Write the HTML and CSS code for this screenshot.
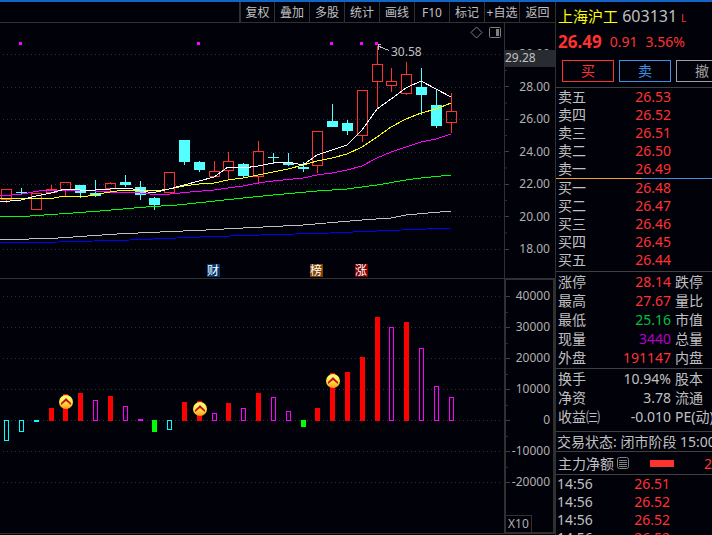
FILE: index.html
```html
<!DOCTYPE html>
<html lang="zh-CN">
<head>
    <meta charset="UTF-8">
    <meta name="viewport" content="width=device-width, initial-scale=1.0">
    <title>上海沪工 603131</title>
    <link rel="stylesheet" href="styles.css">
</head>
<body>
    <!-- 左侧：工具栏和图表 -->
    <main class="charts">
        <nav class="toolbar">
            <button>复权</button>
            <button>叠加</button>
            <button>多股</button>
            <button>统计</button>
            <button>画线</button>
            <button>F10</button>
            <button>标记</button>
            <button>+自选</button>
            <button>返回</button>
        </nav>

        <!-- K线图 -->
        <section class="panel price-panel">
            <svg class="plot" viewBox="0 23 504 255" preserveAspectRatio="xMinYMin meet">
                <g class="grid">
                    <path d="M3 54.5H501M3 87.5H501M3 119.5H501M3 152.5H501M3 184.5H501M3 216.5H501M3 249.5H501"/>
                </g>
                <g id="candles"></g>
                <g id="averages"></g>
                <g fill="#ff00ff">
                    <rect x="19" y="42" width="3" height="3"/>
                    <rect x="197" y="42" width="3" height="3"/>
                    <rect x="330" y="42" width="3" height="3"/>
                    <rect x="360" y="42" width="3" height="3"/>
                    <rect x="375" y="42" width="3" height="3"/>
                </g>
                <path class="arrow" d="M389 50.5L378 46M381 44.5H378V49.5"/>
                <text class="high" x="391" y="56">30.58</text>
                <g class="tool-icons">
                    <path d="M476.5 27L482 32.5L476.5 38L471 32.5Z"/>
                    <rect x="489.500" y="27.500" width="11" height="10" rx="1"/>
                    <rect x="496" y="29" width="3" height="7" fill="#808080" stroke="none"/>
                </g>
                <g class="mark">
                    <rect x="207" y="264" width="13" height="13" fill="#003870"/>
                    <text x="213" y="275">财</text>
                    <rect x="310" y="264" width="13" height="13" fill="#804000"/>
                    <text x="316" y="275">榜</text>
                    <rect x="355" y="264" width="13" height="13" fill="#800000"/>
                    <text x="361" y="275">涨</text>
                </g>
            </svg>
            <div class="axis">
                <ul class="scale">
                    <li>30.00</li>
                    <li>28.00</li>
                    <li>26.00</li>
                    <li>24.00</li>
                    <li>22.00</li>
                    <li>20.00</li>
                    <li>18.00</li>
                </ul>
                <span class="cursor-price">29.28</span>
            </div>
        </section>

        <!-- 资金副图 -->
        <section class="panel volume-panel">
            <svg class="plot" viewBox="0 279 504 254" preserveAspectRatio="xMinYMin meet">
                <defs>
                    <linearGradient id="gold" x1="0" y1="0" x2="0" y2="1">
                        <stop offset="0" stop-color="#ffff70"/>
                        <stop offset="0.5" stop-color="#ffe640"/>
                        <stop offset="1" stop-color="#ff9820"/>
                    </linearGradient>
                    <g id="signal">
                        <circle r="7" fill="url(#gold)"/>
                        <path d="M-4 -1L0 -4L4 -1" fill="none" stroke="#fff8d0"/>
                        <path d="M-5 3V1L0 -4L5 1V3L0 -1Z" fill="#c01010"/>
                    </g>
                </defs>
                <g class="grid">
                    <path d="M3 296.5H501M3 327.5H501M3 358.5H501M3 389.5H501M3 420.5H501M3 451.5H501M3 482.5H501"/>
                </g>
                <g id="bars"></g>
                <use href="#signal" x="66" y="402"/>
                <use href="#signal" x="200" y="409"/>
                <use href="#signal" x="333" y="381"/>
            </svg>
            <div class="axis">
                <ul class="scale">
                    <li>40000</li>
                    <li>30000</li>
                    <li>20000</li>
                    <li>10000</li>
                    <li>0</li>
                    <li>-10000</li>
                    <li>-20000</li>
                </ul>
                <span class="unit">X10</span>
            </div>
        </section>
    </main>

    <!-- 右侧：盘口 -->
    <aside class="quote">
        <header class="quote-head">
            <h1><span class="name">上海沪工</span> <span class="code">603131</span><sup>L</sup></h1>
            <p class="last"><strong>26.49</strong><span>0.91</span><span>3.56%</span></p>
            <div class="trade">
                <button class="buy">买</button>
                <button class="sell">卖</button>
                <button class="cancel">撤</button>
            </div>
        </header>

        <table class="book">
            <tr><th>卖五</th><td>26.53</td></tr>
            <tr><th>卖四</th><td>26.52</td></tr>
            <tr><th>卖三</th><td>26.51</td></tr>
            <tr><th>卖二</th><td>26.50</td></tr>
            <tr><th>卖一</th><td>26.49</td></tr>
        </table>
        <div class="ratio"><i class="ratio-ask"></i><i class="ratio-bid"></i></div>
        <table class="book bids">
            <tr><th>买一</th><td>26.48</td></tr>
            <tr><th>买二</th><td>26.47</td></tr>
            <tr><th>买三</th><td>26.46</td></tr>
            <tr><th>买四</th><td>26.45</td></tr>
            <tr><th>买五</th><td>26.44</td></tr>
        </table>

        <table class="stats">
            <tr><th>涨停</th><td class="up">28.14</td><th>跌停</th></tr>
            <tr><th>最高</th><td class="up">27.67</td><th>量比</th></tr>
            <tr><th>最低</th><td class="down">25.16</td><th>市值</th></tr>
            <tr><th>现量</th><td class="now">3440</td><th>总量</th></tr>
            <tr><th>外盘</th><td class="up">191147</td><th>内盘</th></tr>
        </table>
        <table class="stats basics">
            <tr><th>换手</th><td>10.94%</td><th>股本</th></tr>
            <tr><th>净资</th><td>3.78</td><th>流通</th></tr>
            <tr><th>收益㈢</th><td>-0.010</td><th>PE(动)</th></tr>
        </table>

        <p class="status">交易状态: 闭市阶段 15:00</p>
        <div class="flow">
            <span>主力净额</span>
            <svg class="list-icon" width="12" height="12" viewBox="0 0 12 12">
                <rect x="0.500" y="0.500" width="11" height="11" rx="2"/>
                <path d="M2 3.500H10M2 5.500H10M2 7.500H10M2 9.500H10"/>
            </svg>
            <i class="flow-bar"></i>
            <span class="up">2</span>
        </div>

        <table class="ticks">
            <tr><td>14:56</td><td>26.51</td></tr>
            <tr><td>14:56</td><td>26.52</td></tr>
            <tr><td>14:56</td><td>26.52</td></tr>
            <tr><td>14:56</td><td>26.52</td></tr>
        </table>
    </aside>

    <script src="chart.js"></script>
</body>
</html>
```
FILE: styles.css
```css
* {
    box-sizing: border-box;
}
body {
    display: flex;
    height: 100vh;
    margin: 0;
    overflow: hidden;
    background: #01010a;
    border-top: 2px solid #1464c8;
    color: #c0c0c0;
    font-family: "Noto Sans", "Noto Sans CJK SC", sans-serif;
    font-size: 14px;
}
button {
    padding: 0;
    background: none;
    font-family: inherit;
    cursor: pointer;
}
h1, p, ul {
    margin: 0;
    padding: 0;
    font-weight: normal;
}

/* 图表区 */
.charts {
    display: flex;
    flex: 1;
    flex-direction: column;
    min-width: 0;
}
.toolbar {
    display: flex;
    justify-content: flex-end;
    height: 21px;
    border-bottom: 1px solid #303030;
}
.toolbar button {
    width: 35px;
    border: none;
    border-right: 1px solid #303030;
    color: #c0c0c0;
    font-size: 12px;
    white-space: nowrap;
}
.toolbar button:first-child {
    border-left: 2px solid #303030;
    width: 36px;
}
.toolbar button:last-child {
    border-right: none;
}
.panel {
    display: flex;
}
.price-panel {
    flex: 255;
}
.volume-panel {
    flex: 254;
    border-top: 1px solid #303030;
    border-bottom: 1px solid #303030;
    margin-bottom: 1px;
}
.plot {
    flex: 1;
    min-width: 0;
    shape-rendering: crispEdges;
}
.grid path {
    stroke: #303030;
    stroke-dasharray: 1 3;
}
.average {
    fill: none;
    stroke-width: 1;
}
.arrow {
    fill: none;
    stroke: #c0c0c0;
}
.high {
    fill: #c0c0c0;
    font-size: 12px;
}
.tool-icons {
    fill: none;
    stroke: #808080;
    shape-rendering: auto;
}
.mark text {
    fill: #ffffff;
    font-size: 12px;
    text-anchor: middle;
}
#signal {
    shape-rendering: auto;
}

/* 坐标轴 */
.axis {
    position: relative;
    display: flex;
    flex-direction: column;
    width: 51px;
    border-left: 1px solid #303030;
    color: #b0b0b0;
    font-size: 12px;
    line-height: 16px;
}
.volume-panel .axis {
    border: 2px solid #303030;
    border-top-width: 1px;
    border-bottom-width: 1px;
}
.scale {
    display: flex;
    flex: 1;
    flex-direction: column;
    justify-content: space-between;
    padding: 23px 5px 21px 0;
    list-style: none;
    background: linear-gradient(#303030 1px, transparent 1px) 0 24px / 2px calc((100% - 16px) / 6) repeat-y content-box;
}
.volume-panel .scale {
    padding: 8px 3px 42px 0;
}
.scale li {
    display: flex;
    align-items: center;
    justify-content: space-between;
}
.scale li::before {
    content: "";
    width: 4px;
    height: 1px;
    background: #404040;
}
.cursor-price {
    position: absolute;
    top: 27px;
    right: 0;
    left: 0;
    height: 17px;
    background: #282b30;
    color: #c0c0c0;
}
.unit {
    position: absolute;
    bottom: 0;
    left: 0;
    padding: 0 2px;
    border: 1px solid #303030;
    border-width: 1px 1px 0 0;
}

/* 盘口 */
.quote {
    flex: 0 0 157px;
    overflow: hidden;
    border-left: 1px solid #303030;
    white-space: nowrap;
}
.quote-head {
    padding: 4px 0 5px 2px;
    border-bottom: 1px solid #404040;
}
.quote h1 {
    height: 20px;
    font-size: 16px;
    line-height: 20px;
}
.quote .name {
    color: #ffff00;
    font-size: 15px;
}
.quote sup {
    margin-left: 4px;
    color: #ff3232;
    font-size: 10px;
    line-height: 10px;
    vertical-align: middle;
}
.last {
    display: flex;
    align-items: center;
    gap: 8px;
    height: 30px;
    color: #ff3232;
}
.last strong {
    font-size: 17px;
}
.trade {
    display: flex;
    gap: 5px;
    margin-top: 4px;
    padding-left: 4px;
}
.trade button {
    flex: 0 0 52px;
    height: 22px;
    border: 1px solid;
    font-size: 14px;
    line-height: 18px;
}
.buy {
    color: #ff3232;
}
.sell {
    color: #4090e0;
}
.cancel {
    color: #a0a0a0;
}
table {
    border-spacing: 0;
    table-layout: fixed;
    width: 160px;
}
th, td {
    height: 18px;
    padding: 0;
    font-weight: normal;
    line-height: 18px;
    text-align: right;
}
th {
    width: 50px;
    padding-left: 2px;
    text-align: left;
}
.book {
    width: 115px;
}
.book td, .stats .up, .up {
    color: #ff3232;
}
.ratio {
    display: flex;
    height: 1px;
}
.ratio-ask {
    flex: 86;
    background: #f0a030;
}
.ratio-bid {
    flex: 70;
    background: #4090e0;
}
.bids {
    margin-bottom: 2px;
}
.stats {
    margin-bottom: 1px;
    border-top: 1px solid #404040;
}
.stats th, .stats td {
    height: 19px;
    line-height: 19px;
}
.stats td {
    width: 65px;
}
.stats th:last-child {
    padding-left: 4px;
}
.basics {
    margin-bottom: 5px;
}
.down {
    color: #00c040;
}
.now {
    color: #b400c8;
}
.status {
    padding-left: 1px;
    border-top: 1px solid #404040;
    line-height: 19px;
}
.flow {
    display: flex;
    align-items: center;
    height: 24px;
    padding-left: 2px;
    border: 1px solid #404040;
    border-width: 1px 0;
}
.list-icon {
    margin: 0 21px 0 3px;
    fill: none;
    stroke: #808080;
}
.flow-bar {
    width: 24px;
    height: 7px;
    margin-right: 30px;
    background: #ff3232;
}
.ticks {
    width: 114px;
}
.ticks td:first-child {
    padding-left: 1px;
    text-align: left;
}
.ticks td:last-child {
    color: #ff3232;
}
```
FILE: chart.js
```js
const UP = '#ff3232';
const DOWN = '#54ffff';

// K线：x, 实体上, 实体下, 最高, 最低, 涨(1)/跌(0)
const candles = [
    [6, 189, 200, 189, 203, 1],
    [21, 192, 193, 188, 195, 0],
    [36, 193, 210, 193, 210, 1],
    [51, 189, 193, 185, 193, 1],
    [65, 182, 190, 182, 197, 1],
    [80, 185, 193, 185, 198, 0],
    [95, 193, 196, 180, 197, 0],
    [110, 183, 189, 182, 192, 1],
    [125, 182, 185, 175, 187, 0],
    [140, 187, 195, 181, 200, 0],
    [154, 198, 205, 197, 210, 0],
    [169, 172, 193, 172, 193, 1],
    [184, 140, 162, 140, 165, 0],
    [199, 162, 170, 161, 172, 0],
    [214, 171, 177, 161, 177, 1],
    [228, 161, 171, 152, 180, 1],
    [243, 164, 176, 163, 177, 0],
    [258, 151, 177, 141, 184, 1],
    [273, 157, 158, 153, 164, 0],
    [288, 163, 165, 153, 166, 0],
    [303, 167, 169, 162, 172, 0],
    [317, 131, 166, 131, 173, 1],
    [332, 121, 127, 104, 127, 0],
    [347, 123, 131, 120, 135, 0],
    [362, 90, 136, 90, 142, 1],
    [377, 64, 82, 46, 108, 1],
    [391, 81, 86, 68, 92, 1],
    [406, 74, 94, 62, 95, 1],
    [421, 87, 95, 68, 115, 0],
    [436, 105, 126, 90, 128, 0],
    [451, 111, 123, 93, 133, 1]
];

// 均线
const averages = {
    '#0000ff': '0,243 58,242 130,240 200,237 260,235 330,233 377,231 451,228',
    '#c0c0c0': '0,240 58,238 117,234 160,232 206,230 243,228 303,225 362,220 391,218 406,215 451,211',
    '#00ff00': '0,217 30,216 73,213 100,211 123,209 146,207 177,205 206,202 243,198 273,195 317,191 347,189 377,185 406,180 421,178 451,175',
    '#ff00ff': '0,196 22,194 45,190 80,190 110,192 130,192 150,194 170,194 190,192 214,190 228,188 243,186 258,183 273,181 303,178 317,175 332,173 347,170 362,166 377,158 391,152 406,147 421,142 436,139 451,134',
    '#ffff00': '0,198 40,198 48,199 65,196 88,196 110,192 125,190 146,190 156,191 169,189 184,186 199,184 214,183 228,180 243,178 258,175 273,172 288,169 303,165 317,161 332,158 347,154 362,147 377,137 391,127 406,119 421,113 436,109 451,103',
    '#ffffff': '0,202 21,200 36,196 51,193 65,189 80,190 95,190 110,189 125,188 140,190 152,193 169,189 184,185 199,181 214,177 228,167 243,168 258,166 273,163 288,162 303,165 317,155 332,150 347,145 362,130 377,109 391,99 406,88 421,81 436,89 451,97'
};

// 副图柱：上, 下, 颜色, 是否空心
const bars = [
    [420, 441, '#00ffff', 1], [420, 432, '#00ffff', 1], [420, 422, '#00ffff', 0],
    [408, 421, '#ff0000', 0], [394, 421, '#ff0000', 0], [393, 421, '#ff0000', 0],
    [400, 421, '#ff00ff', 1], [396, 421, '#ff0000', 0], [406, 421, '#ff00ff', 1],
    [419, 421, '#ff00ff', 0], [420, 432, '#00ff00', 0], [420, 430, '#00ffff', 1],
    [402, 421, '#ff0000', 0], [401, 421, '#ff0000', 0], [413, 421, '#ff00ff', 1],
    [403, 421, '#ff0000', 0], [408, 421, '#ff00ff', 1], [393, 421, '#ff0000', 0],
    [397, 421, '#ff00ff', 1], [411, 421, '#ff00ff', 1], [420, 427, '#00ff00', 0],
    [408, 421, '#ff0000', 0], [373, 421, '#ff0000', 0], [372, 421, '#ff0000', 0],
    [357, 421, '#ff0000', 0], [317, 421, '#ff0000', 0], [327, 421, '#ff00ff', 1],
    [322, 421, '#ff0000', 0], [348, 421, '#ff00ff', 1], [386, 421, '#ff00ff', 1],
    [397, 421, '#ff00ff', 1]
];

function box(x, top, width, bottom, color, hollow) {
    if (hollow) {
        return `<rect x="${x + 0.5}" y="${top + 0.5}" width="${width - 1}" height="${bottom - top - 1}" fill="none" stroke="${color}"/>`;
    }
    return `<rect x="${x}" y="${top}" width="${width}" height="${bottom - top}" fill="${color}"/>`;
}

document.getElementById('candles').innerHTML = candles.map(([x, top, bottom, high, low, up]) => {
    const color = up ? UP : DOWN;
    return box(x, high, 1, top, color) + box(x, bottom, 1, low, color) + box(x - 5, top, 11, bottom, color, up);
}).join('');

document.getElementById('averages').innerHTML = Object.entries(averages).map(([color, points]) =>
    `<polyline class="average" stroke="${color}" points="${points}"/>`
).join('');

document.getElementById('bars').innerHTML = bars.map(([top, bottom, color, hollow], i) =>
    box(candles[i][0] - 2, top, 5, bottom, color, hollow)
).join('');
```
